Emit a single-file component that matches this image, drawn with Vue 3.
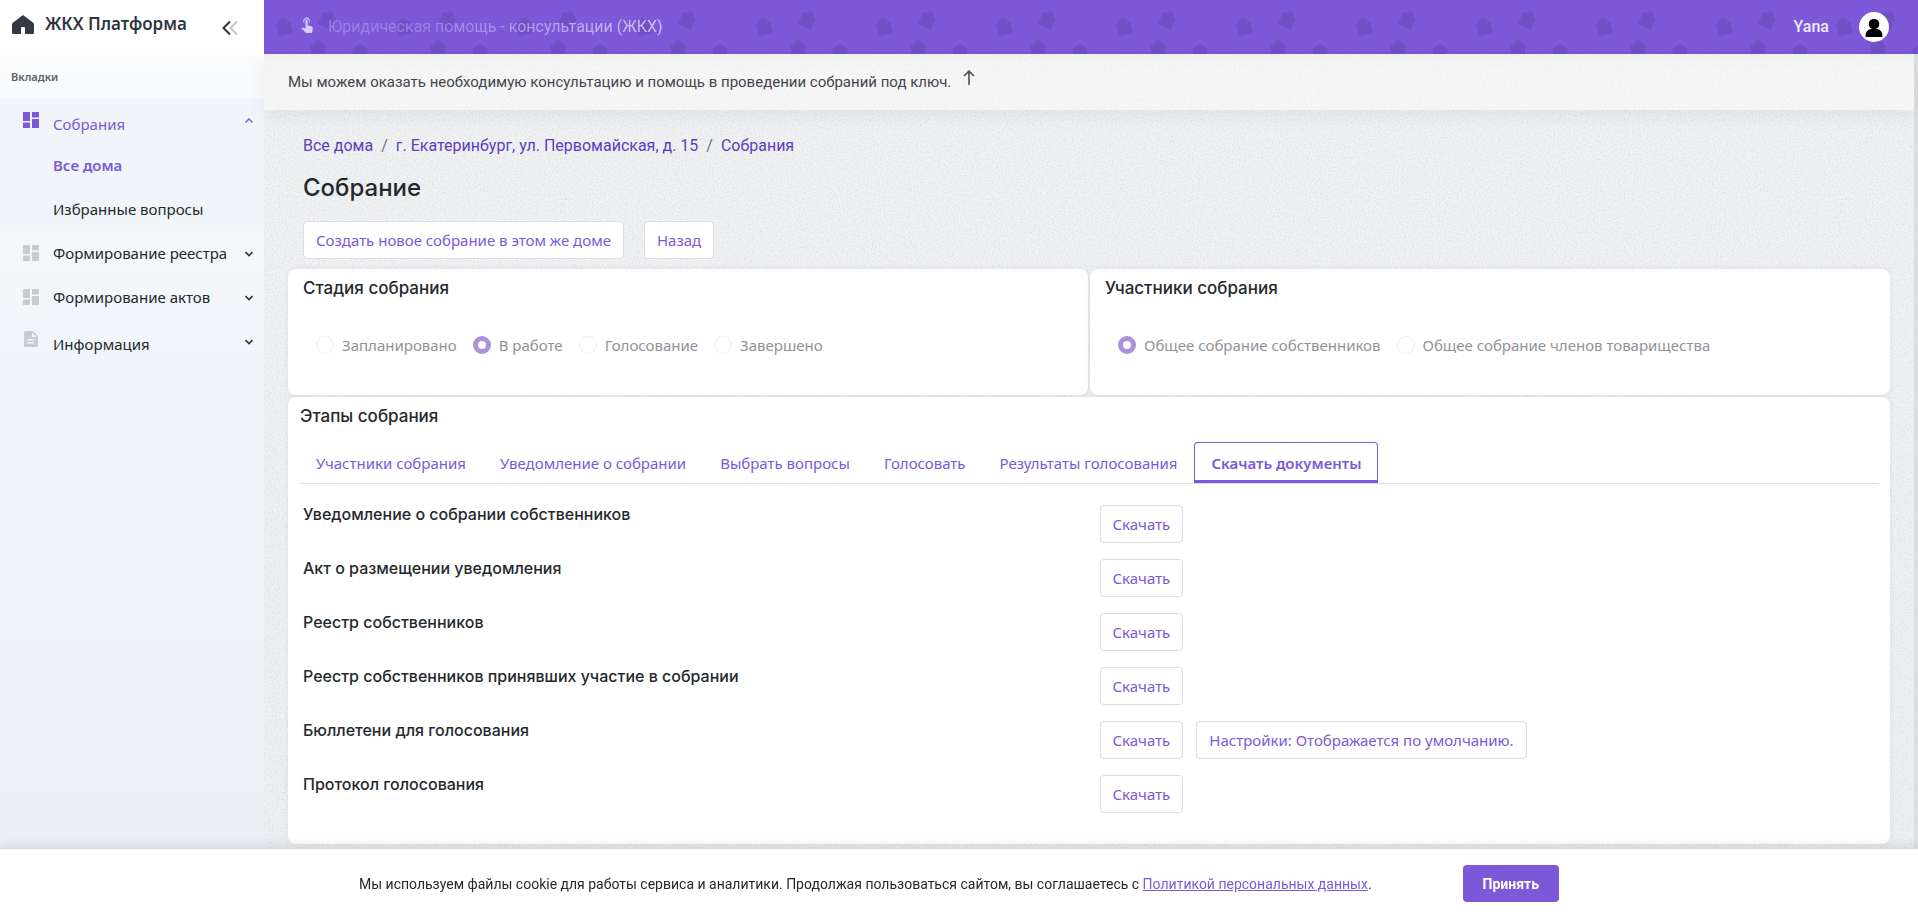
<script setup>
import { ref } from 'vue'

const menu = [
  { title: 'Формирование реестра', icon: 'grid' },
  { title: 'Формирование актов', icon: 'grid' },
  { title: 'Информация', icon: 'file' },
]

const stages = ['Запланировано', 'В работе', 'Голосование', 'Завершено']
const stage = ref('В работе')

const kinds = ['Общее собрание собственников', 'Общее собрание членов товарищества']
const kind = ref('Общее собрание собственников')

const tabs = [
  'Участники собрания',
  'Уведомление о собрании',
  'Выбрать вопросы',
  'Голосовать',
  'Результаты голосования',
  'Скачать документы',
]
const activeTab = ref('Скачать документы')

const documents = [
  { title: 'Уведомление о собрании собственников' },
  { title: 'Акт о размещении уведомления' },
  { title: 'Реестр собственников' },
  { title: 'Реестр собственников принявших участие в собрании' },
  { title: 'Бюллетени для голосования', settings: 'Настройки: Отображается по умолчанию.' },
  { title: 'Протокол голосования' },
]
</script>

<template>
  <div class="layout">
    <aside class="sidebar">
      <div class="brand">
        <svg class="brand-icon" viewBox="0 0 22 19" aria-hidden="true">
          <path d="M11 0 L21.5 8 Q22 8.500 22 9.500 V17.500 Q22 19 20.500 19 H13 V13 Q13 12 12 12 H10 Q9 12 9 13 V19 H1.500 Q0 19 0 17.500 V9.500 Q0 8.500 0.500 8 Z" fill="#343a43" />
        </svg>
        <span class="brand-name">ЖКХ Платформа</span>
        <button class="collapse" type="button" aria-label="Свернуть меню">
          <svg viewBox="0 0 16 16" width="16" height="16" fill="none" stroke-width="2">
            <path d="M15 1.500 L8.500 8 L15 14.500" stroke="#c4c6c9" />
            <path d="M8 1.500 L1.500 8 L8 14.500" stroke="#30363d" />
          </svg>
        </button>
      </div>

      <nav class="menu">
        <p class="menu-label">Вкладки</p>
        <div class="group">
          <a class="item item-open" href="#">
            <svg class="item-icon" viewBox="0 0 16 16" fill="#7d59d9">
              <path d="M0 0H7V9H0Z M9 0H16V5.500H9Z M0 10.500H7V16H0Z M9 7H16V16H9Z" />
            </svg>
            <span class="item-title">Собрания</span>
            <svg class="chevron" viewBox="0 0 8 6" fill="none" stroke="#7d59d9" stroke-width="1.4"><path d="M0.500 4.500 L4 1 L7.500 4.500" /></svg>
          </a>
          <a class="sub sub-active" href="#">Все дома</a>
          <a class="sub" href="#">Избранные вопросы</a>
        </div>
        <a v-for="m in menu" :key="m.title" class="item" :class="{ 'item-info': m.icon === 'file' }" href="#">
          <svg v-if="m.icon === 'grid'" class="item-icon" viewBox="0 0 16 16" fill="#c9cbcf">
            <path d="M0 0H7V9H0Z M9 0H16V5.500H9Z M0 10.500H7V16H0Z M9 7H16V16H9Z" />
          </svg>
          <svg v-else class="item-icon" viewBox="0 0 16 16" fill="#c9cbcf" fill-rule="evenodd">
            <path d="M1 1.500 Q1 0 2.500 0 H10 L15 5 V14.500 Q15 16 13.500 16 H2.500 Q1 16 1 14.500 Z M4.500 8 V9.500 H11.500 V8 Z M4.500 11 V12.500 H11.500 V11 Z M9 1.500 V6 H13.500 Z" />
          </svg>
          <span class="item-title">{{ m.title }}</span>
          <svg class="chevron" viewBox="0 0 8 6" fill="none" stroke="#30363d" stroke-width="1.6"><path d="M0.500 1 L4 4.500 L7.500 1" /></svg>
        </a>
      </nav>
    </aside>

    <div class="page">
      <header class="topbar">
        <svg class="pattern" aria-hidden="true">
          <defs>
            <path id="house" d="M0 -9 L9.500 -1 H7 V9 H-7 V-1 H-9.500 Z" />
            <pattern id="houses" width="120" height="54" patternUnits="userSpaceOnUse">
              <g fill="#7150c5">
                <use href="#house" transform="translate(20 26) rotate(-12)" />
                <use href="#house" transform="translate(64 19) rotate(26)" />
                <use href="#house" transform="translate(54 48)" />
                <use href="#house" transform="translate(96 52)" />
              </g>
            </pattern>
          </defs>
          <rect width="100%" height="100%" fill="url(#houses)" />
        </svg>
        <svg class="touch" viewBox="0 0 12 16" fill="#d9cff5" aria-hidden="true">
          <path d="M3.300 6.400 A3.400 3.400 0 1 1 8 6.400 V4.600 A2.200 2.200 0 0 0 3.400 4.600 Z" opacity="0.7" />
          <path d="M4.500 3.800 Q4.500 2.700 5.600 2.700 Q6.700 2.700 6.700 3.800 V8.200 L10.800 9.600 Q12 10 11.800 11.300 L11.300 15 Q11.100 16 10 16 H6 Q5.300 16 4.700 15.400 L0.400 11.600 L1 11 Q1.500 10.600 2.200 10.800 L4.500 11.500 Z" />
        </svg>
        <span class="promo">Юридическая помощь - консультации (ЖКХ)</span>
        <div class="user">
          <span class="user-name">Yana</span>
          <svg class="avatar" viewBox="0 0 30 30" aria-hidden="true">
            <circle cx="15" cy="15" r="15" fill="#fff" />
            <circle cx="15" cy="12" r="5.300" />
            <path d="M6.500 25 Q6.500 17.500 12 17 H18 Q23.500 17.500 23.500 25 Z" />
          </svg>
        </div>
      </header>

      <div class="body">
        <svg class="grain" aria-hidden="true">
          <filter id="noise" x="0" y="0" width="100%" height="100%">
            <feTurbulence type="fractalNoise" baseFrequency="0.6" numOctaves="2" seed="4" />
            <feColorMatrix values="0 0 0 0 0.500  0 0 0 0 0.500  0 0 0 0 0.500  0.700 0 0 0 -0.300" />
          </filter>
          <rect width="100%" height="100%" filter="url(#noise)" />
        </svg>

        <div class="notice">
          <span>Мы можем оказать необходимую консультацию и помощь в проведении собраний под ключ.</span>
          <svg class="arrow" viewBox="0 0 12 16" fill="none" stroke="#4b5057" stroke-width="1.6"><path d="M6 15 V1.500 M1 6 L6 1.200 L11 6" /></svg>
        </div>

        <main class="content">
          <nav class="crumbs">
            <a href="#">Все дома</a>
            <span>/</span>
            <a href="#">г. Екатеринбург, ул. Первомайская, д. 15</a>
            <span>/</span>
            <a href="#">Собрания</a>
          </nav>
          <h1 class="title">Собрание</h1>
          <div class="toolbar">
            <button class="btn" type="button">Создать новое собрание в этом же доме</button>
            <button class="btn" type="button">Назад</button>
          </div>

          <div class="cards">
            <section class="card">
              <h2 class="card-title">Стадия собрания</h2>
              <div class="radios">
                <label v-for="s in stages" :key="s" class="radio">
                  <input v-model="stage" type="radio" name="stage" :value="s" disabled />
                  <span>{{ s }}</span>
                </label>
              </div>
            </section>
            <section class="card">
              <h2 class="card-title">Участники собрания</h2>
              <div class="radios">
                <label v-for="k in kinds" :key="k" class="radio">
                  <input v-model="kind" type="radio" name="kind" :value="k" disabled />
                  <span>{{ k }}</span>
                </label>
              </div>
            </section>

            <section class="card card-wide">
              <h2 class="card-title steps-title">Этапы собрания</h2>
              <div class="tabs">
                <button
                  v-for="t in tabs"
                  :key="t"
                  type="button"
                  class="tab"
                  :class="{ 'tab-active': t === activeTab }"
                  @click="activeTab = t"
                >{{ t }}</button>
              </div>
              <div class="docs">
                <div v-for="d in documents" :key="d.title" class="doc">
                  <h3 class="doc-title">{{ d.title }}</h3>
                  <div class="doc-actions">
                    <button class="btn" type="button">Скачать</button>
                    <button v-if="d.settings" class="btn" type="button">{{ d.settings }}</button>
                  </div>
                </div>
              </div>
            </section>
          </div>
        </main>
      </div>
    </div>

    <div class="cookie">
      <div class="cookie-inner">
        <p>
          Мы используем файлы cookie для работы сервиса и аналитики. Продолжая пользоваться сайтом, вы соглашаетесь с
          <a href="#">Политикой персональных данных</a>.
        </p>
        <button class="accept" type="button">Принять</button>
      </div>
    </div>
  </div>
</template>

<style>
body {
  margin: 0;
  overflow: hidden;
}
</style>

<style scoped>
.layout {
  display: grid;
  grid-template-columns: 264px 1fr;
  height: 100vh;
  overflow: hidden;
  font-family: Roboto, 'Liberation Sans', sans-serif;
  color: #24292e;
}

h1,
h2,
h3,
p {
  margin: 0;
}

button {
  cursor: pointer;
}

a {
  text-decoration: none;
}

/* sidebar */
.sidebar {
  background: #fff;
  font-family: 'Noto Sans', 'Open Sans', sans-serif;
}

.brand {
  display: flex;
  align-items: center;
  height: 55px;
  padding: 0 26px 0 12px;
  box-sizing: border-box;
}

.brand-icon {
  width: 22px;
  height: 19px;
  margin-bottom: 6px;
}

.brand-name {
  flex: 1;
  margin-left: 11px;
  padding-bottom: 8px;
  font-size: 17px;
  font-weight: 600;
  color: #30363d;
}

.collapse {
  display: flex;
  padding: 0;
  border: none;
  background: none;
}

.menu {
  height: 100%;
  background: linear-gradient(#fafbfc, #f1f5f9 300px, #eaeff4 860px);
  border-top-right-radius: 10px;
}

.menu-label {
  padding: 0 11px;
  font-size: 11px;
  font-weight: 600;
  line-height: 44px;
  color: #5a5f66;
}

.group {
  background: #f1f5f9;
}

.item {
  display: flex;
  align-items: center;
  height: 44px;
  padding: 0 11px 0 23px;
  color: #24292e;
}

.item-open {
  color: #7d59d9;
}

.item-icon {
  width: 16px;
  height: 16px;
  margin-right: 14px;
}

.item-open .item-icon {
  margin-bottom: 2px;
}

.item-info .item-icon {
  margin-bottom: 4px;
}

.item-title {
  flex: 1;
  font-size: 15px;
}

.item-open .item-title,
.item-info .item-title {
  padding-top: 6px;
}

.chevron {
  width: 8px;
  height: 6px;
  margin-top: 2px;
}

.item-open .chevron {
  margin: 0;
}

.sub {
  display: block;
  padding-left: 53px;
  font-size: 15px;
  line-height: 44px;
  color: #24292e;
}

.sub-active {
  font-weight: 600;
  color: #7d59d9;
}

/* top bar */
.page {
  display: flex;
  flex-direction: column;
  min-width: 0;
}

.topbar {
  position: relative;
  display: flex;
  align-items: center;
  height: 54px;
  flex: none;
  padding: 0 29px 0 37px;
  box-sizing: border-box;
  background: #7d59d9;
}

.pattern {
  position: absolute;
  inset: 0;
  width: 100%;
  height: 100%;
}

.touch,
.promo,
.user {
  position: relative;
}

.touch {
  width: 12px;
  height: 16px;
  margin-bottom: 4px;
}

.promo {
  margin-left: 15px;
  padding-bottom: 2px;
  font-size: 16px;
  color: transparent;
  background: linear-gradient(90deg, #9b7fe2 30%, #d3c6f3);
  background-clip: text;
}

.user {
  display: flex;
  align-items: center;
  gap: 30px;
  margin-left: auto;
}

.user-name {
  padding-bottom: 2px;
  font-size: 16px;
  font-weight: 500;
  color: #f0ebfb;
}

.avatar {
  width: 30px;
  height: 30px;
}

/* page body */
.body {
  position: relative;
  flex: 1;
  border-right: 4px solid #dddedf;
  background: linear-gradient(#f1f2f4, #edf1f4);
}

.grain {
  position: absolute;
  inset: 0;
  width: 100%;
  height: 100%;
}

.notice {
  position: relative;
  display: flex;
  align-items: center;
  gap: 12px;
  height: 56px;
  padding: 0 24px;
  font-size: 15px;
  color: #43474d;
  background: linear-gradient(rgba(240, 240, 240, 0.5), rgba(252, 251, 250, 0.5) 14px);
  box-shadow: 0 6px 18px rgba(60, 65, 75, 0.08);
}

.arrow {
  width: 12px;
  height: 16px;
  margin-bottom: 8px;
}

.content {
  position: relative;
  padding: 24px 24px 0;
}

.crumbs {
  display: flex;
  gap: 8px;
  margin-left: 15px;
  font-size: 16px;
  line-height: 24px;
}

.crumbs a {
  color: #5f3dc0;
}

.crumbs span {
  color: #6c757d;
}

.title {
  margin: 14px 0 0 15px;
  font-family: Inter, sans-serif;
  font-size: 24px;
  font-weight: 500;
  line-height: 32px;
}

.toolbar {
  display: flex;
  gap: 20px;
  margin: 17px 0 10px 15px;
}

.btn {
  height: 38px;
  padding: 0 12px;
  border: 1px solid #dcdde0;
  border-radius: 4px;
  background: #fff;
  font-family: 'Noto Sans', 'Open Sans', sans-serif;
  font-size: 15px;
  color: #7d59d9;
}

.cards {
  display: grid;
  grid-template-columns: 1fr 1fr;
  gap: 2px;
}

.card {
  height: 126px;
  border-radius: 8px;
  background: #fff;
  box-shadow: 0 0 6px rgba(40, 45, 55, 0.08);
}

.card-title {
  padding: 7px 15px 0;
  font-family: Inter, sans-serif;
  font-size: 17px;
  font-weight: 500;
  line-height: 24px;
}

.radios {
  display: flex;
  gap: 16px;
  padding: 33px 28px 0;
}

.radio {
  display: flex;
  align-items: center;
  gap: 8px;
  font-family: 'Noto Sans', 'Open Sans', sans-serif;
  font-size: 15px;
  line-height: 24px;
  color: #919396;
}

.radio input {
  appearance: none;
  width: 18px;
  height: 18px;
  margin: 0;
  box-sizing: border-box;
  border: 1px solid #eeeef0;
  border-radius: 50%;
  background: #fff;
}

.radio input:checked {
  border: 5px solid #a792db;
}

.card-wide {
  grid-column: 1 / -1;
  height: auto;
  min-height: 447px;
}

.steps-title {
  padding-left: 12px;
}

.tabs {
  display: flex;
  height: 42px;
  margin: 14px 12px 0 11px;
  border-bottom: 1px solid #dcdde0;
  box-sizing: border-box;
}

.tab {
  padding: 3px 16px 0;
  border: 1px solid transparent;
  border-bottom: 3px solid transparent;
  border-radius: 4px 4px 0 0;
  background: none;
  font-family: 'Noto Sans', 'Open Sans', sans-serif;
  font-size: 15px;
  color: #7d59d9;
}

.tab-active {
  border-color: #7d59d9;
  font-weight: 600;
}

.docs {
  padding: 21px 0 0 15px;
}

.doc {
  display: grid;
  grid-template-columns: 1fr 1fr;
  gap: 6px;
  height: 54px;
}

.doc-title {
  font-family: Inter, sans-serif;
  font-size: 16px;
  font-weight: 500;
  line-height: 18px;
}

.doc-actions {
  display: flex;
  align-items: flex-start;
  gap: 13px;
}

/* cookie bar */
.cookie {
  position: fixed;
  left: 0;
  right: 0;
  bottom: 0;
  border-top: 1px solid #d8dadd;
  background: #fff;
  box-shadow: 0 -2px 10px rgba(40, 45, 55, 0.12);
}

.cookie-inner {
  display: flex;
  align-items: center;
  justify-content: space-between;
  max-width: 1200px;
  margin: 0 auto;
  padding: 16px 0 14px;
}

.cookie p {
  font-size: 14px;
}

.cookie a {
  color: #7d59d9;
  text-decoration: underline;
}

.accept {
  height: 37px;
  padding: 0 20px;
  border: none;
  border-radius: 4px;
  background: #7d59d9;
  font-family: Roboto, sans-serif;
  font-size: 14px;
  font-weight: 700;
  color: #fff;
}
</style>
